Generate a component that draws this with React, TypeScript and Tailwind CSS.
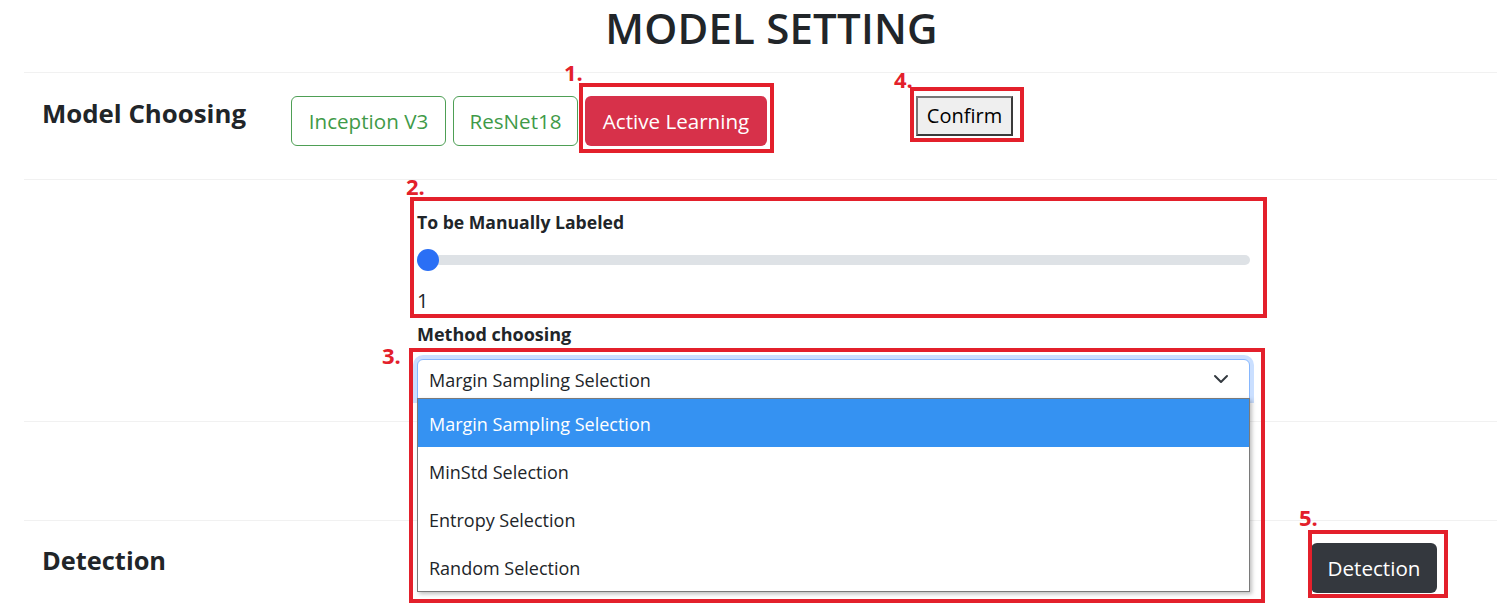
import React from "react";

const RedBox = ({ className }: { className: string }) => (
  <div className={`pointer-events-none absolute z-30 border-[4px] border-[#e3202b] ${className}`} />
);

const RedNum = ({ n, className }: { n: string; className: string }) => (
  <div className={`absolute z-30 text-[22px] font-bold leading-none text-[#e3202b] ${className}`}>{n}</div>
);

export default function App() {
  return (
    <div className="relative h-[607px] w-[1497px] overflow-hidden bg-white font-['Open_Sans',sans-serif] text-[#212529]">
      <h1 className="h-[72px] pl-[46px] pt-[1px] text-center text-[42px] font-semibold leading-[54px] tracking-[0.2px]">
        MODEL SETTING
      </h1>

      {/* Row 1 */}
      <div className="ml-[24px] flex h-[107px] items-start border-t border-[#f1f1f1] pt-[23px]">
        <div className="w-[267px] pl-[18px] pt-[1px] text-[25.8px] font-bold leading-[32px]">Model Choosing</div>
        <div className="flex items-start gap-[7px]">
          <button className="h-[50px] w-[155px] rounded-[6px] border border-[#4e9f55] text-[20.6px] text-[#3f9a48]">
            Inception V3
          </button>
          <button className="h-[50px] w-[125px] rounded-[6px] border border-[#4e9f55] text-[20.6px] text-[#3f9a48]">
            ResNet18
          </button>
          <div className="relative">
            <button className="h-[50px] w-[182px] rounded-[6px] bg-[#d7314a] text-[20.6px] text-white">
              Active Learning
            </button>
            <RedBox className="-left-[6px] -top-[13px] -right-[7px] -bottom-[7px]" />
            <RedNum n="1." className="-left-[21px] -top-[35px]" />
          </div>
        </div>
        <div className="relative ml-[149px]">
          <button className="h-[40px] w-[97px] border-[2px] border-t-[#777] border-l-[#777] border-r-[#3a3a3a] border-b-[#3a3a3a] bg-[#efefef] text-[20px] leading-none text-black">
            Confirm
          </button>
          <RedBox className="-left-[6px] -top-[9px] -right-[11px] -bottom-[6px]" />
          <RedNum n="4." className="-left-[22px] -top-[28px]" />
        </div>
      </div>

      {/* Row 2 */}
      <div className="relative z-20 ml-[24px] h-[242px] border-t border-[#f1f1f1]">
        <div className="ml-[393px] flex w-[833px] flex-col pt-[30px]">
          <div className="text-[17.6px] font-bold leading-[24px]">To be Manually Labeled</div>
          <div className="relative mt-[15px] flex h-[22px] items-center">
            <div className="h-[10px] w-full rounded-full bg-[#dee2e6]" />
            <div className="absolute left-0 top-0 h-[22px] w-[22px] rounded-full bg-[#2a6ff5]" />
          </div>
          <div className="mt-[16px] text-[20px] leading-[28px]">1</div>
          <div className="mt-[7px] text-[18px] font-bold leading-[24px]">Method choosing</div>
          <div className="relative mt-[13px]">
            <div className="flex h-[40px] items-center justify-between rounded-t-[6px] border border-[#86b7fe] bg-white pl-[11px] pr-[20px] text-[18px] shadow-[0_0_0_4px_rgba(13,110,253,0.22)]">
              <span className="pt-[2px]">Margin Sampling Selection</span>
              <svg width="16" height="12" viewBox="0 0 16 12" fill="none">
                <path d="M2 3l6 6 6-6" stroke="#343a40" strokeWidth="2" strokeLinecap="round" strokeLinejoin="round" />
              </svg>
            </div>
            <div className="absolute left-0 top-[39px] z-20 w-full border border-[#7a7a7a] bg-white text-[18px] shadow-[2px_2px_4px_rgba(0,0,0,0.25)]">
              <div className="flex h-[48px] items-center bg-[#3592f2] pl-[11px] pt-[2px] text-white">Margin Sampling Selection</div>
              <div className="flex h-[48px] items-center pl-[11px] pt-[2px]">MinStd Selection</div>
              <div className="flex h-[48px] items-center pl-[11px] pt-[2px]">Entropy Selection</div>
              <div className="flex h-[48px] items-center pl-[11px] pt-[2px]">Random Selection</div>
            </div>
          </div>
        </div>
        <RedBox className="left-[386px] top-[17px] h-[121px] w-[857px]" />
        <RedNum n="2." className="left-[382px] -top-[5px]" />
        <RedBox className="left-[385px] top-[168px] h-[255px] w-[856px]" />
        <RedNum n="3." className="left-[358px] top-[164px]" />
      </div>

      {/* Row 3 */}
      <div className="ml-[24px] h-[99px] border-t border-[#f1f1f1]" />

      {/* Row 4 */}
      <div className="ml-[24px] flex h-[87px] items-start justify-between border-t border-[#f1f1f1] pr-[60px] pt-[22px]">
        <div className="pl-[18px] pt-[1px] text-[25.4px] font-bold leading-[32px]">Detection</div>
        <div className="relative">
          <button className="h-[50px] w-[126px] rounded-[6px] bg-[#34383e] pt-[1px] text-[20.6px] text-white">Detection</button>
          <RedBox className="-left-[3px] -top-[13px] -right-[11px] -bottom-[5px]" />
          <RedNum n="5." className="-left-[12px] -top-[37px]" />
        </div>
      </div>
    </div>
  );
}
